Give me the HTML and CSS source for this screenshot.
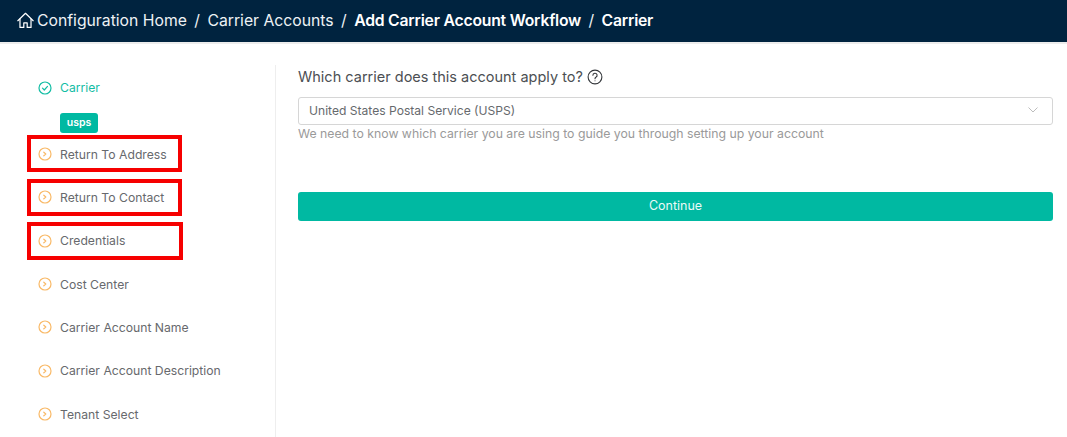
FILE: index.html
```html
<!DOCTYPE html>
<html lang="en">
<head>
<meta charset="utf-8">
<title>Carrier</title>
<link rel="stylesheet" href="styles.css">
</head>
<body>
<header class="topbar">
  <svg class="home" viewBox="0 0 16 16" fill="none" stroke="currentColor" stroke-width="1.15" stroke-linejoin="round" stroke-linecap="round"><path d="M0.8 8.2 8 1.2l7.2 7"/><path d="M2.8 6.6v7.9h3.6v-4.2h3.2v4.2h3.6V6.6"/></svg>
  <span class="crumb">Configuration Home</span><span class="sep">/</span>
  <span class="crumb">Carrier Accounts</span><span class="sep">/</span>
  <span class="crumb strong">Add Carrier Account Workflow</span><span class="sep">/</span>
  <span class="crumb strong">Carrier</span>
</header>
<div class="page">
  <nav class="steps">
    <div class="step done">
      <svg class="ico" viewBox="0 0 14 14" fill="none" stroke="currentColor" stroke-width="1.2"><circle cx="7" cy="7" r="6"/><path d="M4.5 7.2 6.3 9l3.2-3.6" stroke-linecap="round" stroke-linejoin="round"/></svg>
      <span>Carrier</span>
    </div>
    <div class="tagrow"><span class="tag">usps</span></div>
    <div class="step">
      <svg class="ico" viewBox="0 0 14 14" fill="none" stroke="currentColor" stroke-width="1.2"><circle cx="7" cy="7" r="6"/><path d="M5.8 5.2 7.8 7l-2 1.8" stroke-linecap="round" stroke-linejoin="round"/></svg>
      <span>Return To Address</span><i class="mark"></i>
    </div>
    <div class="step">
      <svg class="ico" viewBox="0 0 14 14" fill="none" stroke="currentColor" stroke-width="1.2"><circle cx="7" cy="7" r="6"/><path d="M5.8 5.2 7.8 7l-2 1.8" stroke-linecap="round" stroke-linejoin="round"/></svg>
      <span>Return To Contact</span><i class="mark"></i>
    </div>
    <div class="step">
      <svg class="ico" viewBox="0 0 14 14" fill="none" stroke="currentColor" stroke-width="1.2"><circle cx="7" cy="7" r="6"/><path d="M5.8 5.2 7.8 7l-2 1.8" stroke-linecap="round" stroke-linejoin="round"/></svg>
      <span>Credentials</span><i class="mark tall"></i>
    </div>
    <div class="step">
      <svg class="ico" viewBox="0 0 14 14" fill="none" stroke="currentColor" stroke-width="1.2"><circle cx="7" cy="7" r="6"/><path d="M5.8 5.2 7.8 7l-2 1.8" stroke-linecap="round" stroke-linejoin="round"/></svg>
      <span>Cost Center</span>
    </div>
    <div class="step">
      <svg class="ico" viewBox="0 0 14 14" fill="none" stroke="currentColor" stroke-width="1.2"><circle cx="7" cy="7" r="6"/><path d="M5.8 5.2 7.8 7l-2 1.8" stroke-linecap="round" stroke-linejoin="round"/></svg>
      <span>Carrier Account Name</span>
    </div>
    <div class="step">
      <svg class="ico" viewBox="0 0 14 14" fill="none" stroke="currentColor" stroke-width="1.2"><circle cx="7" cy="7" r="6"/><path d="M5.8 5.2 7.8 7l-2 1.8" stroke-linecap="round" stroke-linejoin="round"/></svg>
      <span>Carrier Account Description</span>
    </div>
    <div class="step">
      <svg class="ico" viewBox="0 0 14 14" fill="none" stroke="currentColor" stroke-width="1.2"><circle cx="7" cy="7" r="6"/><path d="M5.8 5.2 7.8 7l-2 1.8" stroke-linecap="round" stroke-linejoin="round"/></svg>
      <span>Tenant Select</span>
    </div>
  </nav>
  <main class="content">
    <div class="question">
      <span>Which carrier does this account apply to?</span>
      <svg class="help" viewBox="0 0 16 16" fill="none" stroke="currentColor" stroke-width="1.1"><circle cx="8" cy="8" r="6.9"/><path d="M5.9 6.3A2.1 2.1 0 1 1 8.9 8.2C8.2 8.6 8 9 8 9.8" stroke-linecap="round"/><circle cx="8" cy="11.8" r="0.5" fill="currentColor" stroke="none"/></svg>
    </div>
    <div class="select">
      <span>United States Postal Service (USPS)</span>
      <svg class="chev" viewBox="0 0 10 6" fill="none" stroke="currentColor" stroke-width="0.9"><path d="M0.5 0.5 5 5l4.5-4.5"/></svg>
    </div>
    <p class="hint">We need to know which carrier you are using to guide you through setting up your account</p>
    <button class="continue" type="button">Continue</button>
  </main>
</div>
</body>
</html>
```
FILE: styles.css
```css
* { box-sizing: border-box; }
html, body { margin: 0; padding: 0; height: 100%; }
body {
  width: 1067px;
  height: 437px;
  overflow: hidden;
  background: #fff;
  font-family: Inter, "Liberation Sans", sans-serif;
  color: #5f6368;
}
.topbar {
  height: 44px;
  background: #00233f;
  border-bottom: 2px solid #ececec;
  color: #eef2f5;
  display: flex;
  align-items: center;
  padding-left: 17px;
  padding-bottom: 2px;
  font-size: 15.75px;
  white-space: nowrap;
}
.home { width: 17px; height: 17px; margin-right: 3px; color: #fff; flex: none; }
.sep { margin: 0 7.4px; }
.strong { font-weight: 600; color: #fff; letter-spacing: -0.22px; }
.page { display: flex; padding-top: 21px; height: 393px; }
.steps {
  width: 276px;
  flex: none;
  border-right: 1px solid #eeeeee;
  padding-left: 38px;
  padding-top: 1px;
}
.step {
  position: relative;
  height: 43.35px;
  display: flex;
  align-items: center;
  gap: 8px;
  font-size: 12.2px;
  color: #67696d;
  white-space: nowrap;
}
.ico { width: 14px; height: 14px; flex: none; color: #f9b967; }
.step.done { color: #12bda4; }
.step.done .ico { color: #12bda4; }
.tagrow { height: 24px; padding-left: 22px; margin-top: -1px; display: flex; align-items: flex-start; padding-top: 5px; }
.tag {
  background: #00b9a2;
  color: #fff;
  font-size: 10.5px;
  font-weight: 600;
  line-height: 20px;
  height: 20px;
  width: 38px;
  text-align: center;
  border-radius: 3px;
}
.mark {
  position: absolute;
  left: -11px;
  top: 3px;
  width: 155px;
  height: 37px;
  border: 4px solid #f60000;
}
.mark.tall { height: 38px; width: 156px; }
.content { flex: 1; padding: 0 14px 0 22px; }
.question {
  display: flex;
  align-items: center;
  gap: 4px;
  height: 23px;
  font-size: 14.5px;
  color: #4c4f53;
}
.help { width: 16px; height: 16px; color: #34373b; flex: none; }
.select {
  margin-top: 9px;
  height: 28px;
  border: 1px solid #d6d6d6;
  border-radius: 3px;
  padding: 0 14px 2px 10px;
  display: flex;
  align-items: center;
  justify-content: space-between;
  font-size: 12.1px;
  color: #66696d;
}
.chev { width: 10px; height: 6px; color: #b5b5b5; }
.hint {
  margin: 1px 0 0;
  font-size: 12.28px;
  line-height: 16px;
  color: #9a9a9a;
}
.continue {
  display: block;
  width: 100%;
  margin-top: 50px;
  height: 29px;
  border: 0;
  border-radius: 3px;
  background: #00b9a2;
  color: #eafaf7;
  font: inherit;
  font-size: 12.5px;
  padding: 0 0 2px;
}
```
